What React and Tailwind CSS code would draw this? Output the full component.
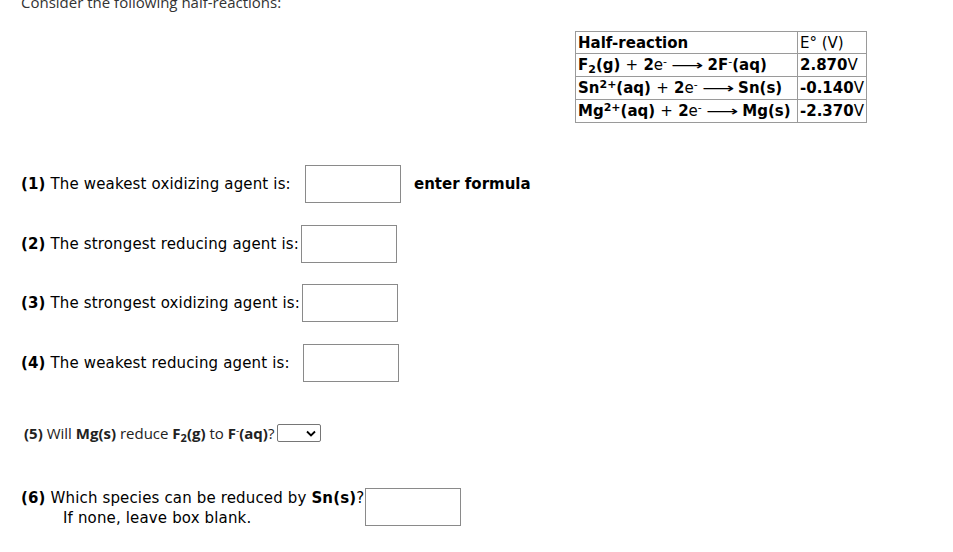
import React from "react";

const verdana = { fontFamily: '"DejaVu Sans", Verdana, sans-serif' };

function Box({ className = "" }) {
    return <div className={"h-[38px] w-[96px] shrink-0 border border-[#8a8a8a] bg-white " + className} />;
}

function Minus() {
    return <sup className="text-[11px] font-normal">-</sup>;
}

function Electron() {
    return (
        <span className="font-normal">
            e<Minus />
        </span>
    );
}

function Arrow() {
    return (
        <span className="mx-[1px] inline-block w-[28px] text-center font-normal leading-none">
            <span className="inline-block scale-x-[1.6] text-[14px]">⟶</span>
        </span>
    );
}

function App() {
    const rows = [
        {
            left: (
                <>
                    F<sub className="text-[11px]">2</sub>(g) <span className="font-normal">+</span> 2<Electron /> <Arrow /> 2F
                    <Minus />
                    (aq)
                </>
            ),
            value: "2.870",
        },
        {
            left: (
                <>
                    Sn<sup className="text-[11px]">2+</sup>(aq) <span className="font-normal">+</span> 2<Electron /> <Arrow /> Sn(s)
                </>
            ),
            value: "-0.140",
        },
        {
            left: (
                <>
                    Mg<sup className="text-[11px]">2+</sup>(aq) <span className="font-normal">+</span> 2<Electron /> <Arrow /> Mg(s)
                </>
            ),
            value: "-2.370",
        },
    ];

    const questions = [
        { n: "(1)", text: "The weakest oxidizing agent is:", labelW: "w-[284px]", mt: "mt-[42px]", hint: true },
        { n: "(2)", text: "The strongest reducing agent is:", labelW: "w-[280px]", mt: "mt-[22px]" },
        { n: "(3)", text: "The strongest oxidizing agent is:", labelW: "w-[281px]", mt: "mt-[21px]" },
        { n: "(4)", text: "The weakest reducing agent is:", labelW: "w-[282px]", mt: "mt-[22px]" },
    ];

    return (
        <div className="min-h-[552px] w-[953px] overflow-hidden bg-white pl-[21px] text-black">
            <p className="-mt-[8px] h-[20px] text-[15px] leading-[20px] text-[#333]" style={{ fontFamily: '"Open Sans", sans-serif' }}>
                Consider the following half-reactions:
            </p>

            <div className="ml-[554px] mt-[19px]" style={verdana}>
                <table className="border-collapse text-[15px] leading-[20px]">
                    <tbody>
                        <tr>
                            <td className="h-[22px] w-[222px] border border-[#9a9a9a] px-[2px] font-bold">Half-reaction</td>
                            <td className="h-[22px] w-[69px] border border-[#9a9a9a] px-[2px]">E° (V)</td>
                        </tr>
                        {rows.map((row, i) => (
                            <tr key={i}>
                                <td className="h-[23px] border border-[#9a9a9a] px-[2px] font-bold whitespace-nowrap">{row.left}</td>
                                <td className="h-[23px] border border-[#9a9a9a] px-[2px] whitespace-nowrap">
                                    <b>{row.value}</b>V
                                </td>
                            </tr>
                        ))}
                    </tbody>
                </table>
            </div>

            {questions.map((q) => (
                <div key={q.n} className={"flex items-center tracking-[0.15px] " + q.mt} style={verdana}>
                    <div className={"shrink-0 text-[15px] leading-[20px] whitespace-nowrap " + q.labelW}>
                        <b>{q.n}</b> {q.text}
                    </div>
                    <Box />
                    {q.hint && <b className="ml-[13px] text-[15px] tracking-normal">enter formula</b>}
                </div>
            ))}

            <div className="mt-[42px] flex h-[18px] items-center pl-[3px] text-[15px] leading-[18px] text-[#222]" style={{ fontFamily: '"Open Sans", sans-serif' }}>
                <span className="mr-[3px] whitespace-nowrap">
                    <b>(5)</b> Will <b>Mg(s)</b> reduce{" "}
                    <b>
                        F<sub className="text-[11px]">2</sub>(g)
                    </b>{" "}
                    to{" "}
                    <b>
                        F<sup className="text-[10px] font-normal">-</sup>(aq)
                    </b>
                    ?
                </span>
                <div className="flex h-[18px] w-[44px] shrink-0 items-center justify-end rounded-[2px] border border-[#767676] bg-white pr-[4px]">
                    <svg width="10" height="7" viewBox="0 0 10 7">
                        <path d="M1 1.5 L5 5.5 L9 1.5" fill="none" stroke="#000" strokeWidth="1.8" />
                    </svg>
                </div>
            </div>

            <div className="mt-[46px] flex items-start tracking-[0.15px]" style={verdana}>
                <div className="w-[344px] shrink-0 text-[15px] leading-[20px]">
                    <div className="whitespace-nowrap">
                        <b>(6)</b> Which species can be reduced by <b>Sn(s)</b>?
                    </div>
                    <div className="pl-[42px]">If none, leave box blank.</div>
                </div>
                <Box />
            </div>
        </div>
    );
}

export default App;
